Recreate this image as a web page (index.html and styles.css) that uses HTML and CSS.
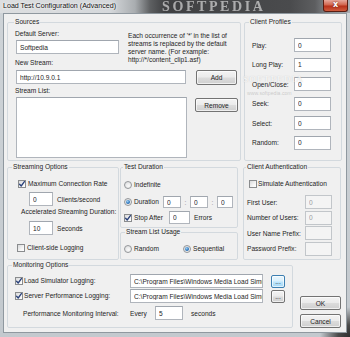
FILE: index.html
```html
<!DOCTYPE html>
<html>
<head>
<meta charset="utf-8">
<title>Load Test Configuration (Advanced)</title>
<link rel="stylesheet" href="styles.css">
</head>
<body>
<div class="window">
  <div class="titlebar">
    <span class="title">Load Test Configuration (Advanced)</span>
    <span class="wm-title">SOFTPEDIA</span>
    <span class="close">x</span>
  </div>
  <div class="client">
    <span class="wm wm-big">SOFTPEDIA</span>
    <span class="wm wm-url">www.softpedia.com</span>

    <div class="row row1">
      <fieldset class="grp sources">
        <legend>Sources</legend>
        <div class="src-grid">
          <span class="lbl">Default Server:</span>
          <p class="desc">Each occurrence of '*' in the list of<br>streams is replaced by the default<br>server name. (For example:<br>http://*/content_clip1.asf)</p>
          <input class="edit srv" value="Softpedia">
          <span class="lbl lbl-new">New Stream:</span>
        </div>
        <div class="src-row r-new">
          <input class="edit stream" value="http://10.9.0.1">
          <button class="btn add">Add</button>
        </div>
        <span class="lbl lbl-list">Stream List:</span>
        <div class="src-row r-list">
          <div class="listbox"></div>
          <button class="btn remove">Remove</button>
        </div>
      </fieldset>

      <fieldset class="grp profiles">
        <legend>Client Profiles</legend>
        <div class="prof-grid">
          <span>Play:</span><input class="edit" value="0">
          <span>Long Play:</span><input class="edit" value="1">
          <span>Open/Close:</span><input class="edit" value="0">
          <span>Seek:</span><input class="edit" value="0">
          <span>Select:</span><input class="edit" value="0">
          <span>Random:</span><input class="edit" value="0">
        </div>
      </fieldset>
    </div>

    <div class="row row2">
      <fieldset class="grp streaming">
        <legend>Streaming Options</legend>
        <div class="chkrow maxconn"><span class="chk on"><svg viewBox="0 0 8 8"><path d="M1.6 4.2 L3.2 6 L6.4 1.6"/></svg></span><span class="cl">Maximum Connection Rate</span></div>
        <div class="inrow r-rate"><input class="edit num" value="0"><span class="after">Clients/second</span></div>
        <span class="lbl accel">Accelerated Streaming Duration:</span>
        <div class="inrow r-secs"><input class="edit num" value="10"><span class="after">Seconds</span></div>
        <div class="chkrow logging"><span class="chk"></span><span class="cl">Client-side Logging</span></div>
      </fieldset>

      <div class="midcol">
        <fieldset class="grp duration">
          <legend>Test Duration</legend>
          <div class="radrow"><span class="radio"></span><span class="rl">Indefinite</span></div>
          <div class="durrow">
            <span class="durlbl"><span class="radio on"></span><span class="rl">Duration</span></span>
            <input class="edit d1" value="0"><span class="colon">:</span><input class="edit d1" value="0"><span class="colon">:</span><input class="edit d3" value="0">
          </div>
          <div class="stoprow">
            <span class="stoplbl"><span class="chk on"><svg viewBox="0 0 8 8"><path d="M1.6 4.2 L3.2 6 L6.4 1.6"/></svg></span><span class="cl">Stop After</span></span>
            <input class="edit errs" value="0"><span class="after">Errors</span>
          </div>
        </fieldset>
        <fieldset class="grp usage">
          <legend>Stream List Usage</legend>
          <div class="radrow">
            <span class="opt-random"><span class="radio"></span><span class="rl">Random</span></span>
            <span class="radio on"></span><span class="rl">Sequential</span>
          </div>
        </fieldset>
      </div>

      <fieldset class="grp auth">
        <legend>Client Authentication</legend>
        <div class="chkrow sim"><span class="chk"></span><span class="cl">Simulate Authentication</span></div>
        <div class="auth-grid">
          <span>First User:</span><input class="edit dis" value="0" disabled>
          <span>Number of Users:</span><input class="edit dis" value="0" disabled>
          <span>User Name Prefix:</span><input class="edit dis" value="" disabled>
          <span>Password Prefix:</span><input class="edit dis" value="" disabled>
        </div>
      </fieldset>
    </div>

    <div class="row row3">
      <fieldset class="grp monitoring">
        <legend>Monitoring Options</legend>
        <div class="monrow">
          <span class="monlbl"><span class="chk on"><svg viewBox="0 0 8 8"><path d="M1.6 4.2 L3.2 6 L6.4 1.6"/></svg></span><span class="cl">Load Simulator Logging:</span></span>
          <input class="edit path" value="C:\Program Files\Windows Media Load Simulator\Logs">
          <button class="btn dots hot">...</button>
        </div>
        <div class="monrow r2">
          <span class="monlbl"><span class="chk on"><svg viewBox="0 0 8 8"><path d="M1.6 4.2 L3.2 6 L6.4 1.6"/></svg></span><span class="cl">Server Performance Logging:</span></span>
          <input class="edit path" value="C:\Program Files\Windows Media Load Simulator\Logs">
          <button class="btn dots">...</button>
        </div>
        <div class="monrow r3">
          <span class="intlbl">Performance Monitoring Interval:</span>
          <span class="every">Every</span>
          <input class="edit interval" value="5">
          <span class="secs">seconds</span>
        </div>
      </fieldset>
      <div class="okcol">
        <button class="btn ok">OK</button>
        <button class="btn cancel">Cancel</button>
      </div>
    </div>
  </div>
</div>
</body>
</html>
```

FILE: styles.css
```css
* { box-sizing: border-box; }

html, body {
  margin: 0;
  padding: 0;
}

body {
  width: 350px;
  height: 337px;
  overflow: hidden;
  font-family: "Liberation Sans", Arial, sans-serif;
  font-size: 6.6px;
  color: #1e1e1e;
}

.window {
  width: 350px;
  height: 337px;
  display: flex;
  flex-direction: column;
  position: relative;
  background:
    radial-gradient(circle at 100% 100%, #2e2e2e 0, #4a4a4a 12px, rgba(80,80,80,0) 30px),
    linear-gradient(180deg, #cfd4d8 0%, #c3c9ce 100%);
}

/* ---------- title bar ---------- */
.titlebar {
  height: 13px;
  flex: none;
  position: relative;
  overflow: hidden;
  display: flex;
  align-items: center;
  padding-left: 3px;
  background: linear-gradient(90deg,
    #dcdee0 0px, #d5d8db 110px, #a9adb0 135px, #5e6062 150px,
    #3f4042 165px, #4a4b4d 290px, #5d5e60 315px, #8a8e92 330px, #a9aeb3 350px);
}

.title {
  position: relative;
  z-index: 2;
  font-size: 7.1px;
  line-height: 9px;
  color: #111;
  text-shadow: 0 0 3px #fff, 0 0 2px #fff;
  white-space: nowrap;
}

.wm-title {
  position: absolute;
  left: 162px;
  top: 0;
  font-family: "Liberation Serif", serif;
  font-weight: bold;
  font-size: 14px;
  line-height: 13px;
  letter-spacing: 2.6px;
  color: rgba(235, 235, 235, 0.62);
  filter: blur(0.4px);
  white-space: nowrap;
}

.close {
  position: absolute;
  right: 2px;
  top: 0;
  width: 25px;
  height: 12px;
  z-index: 3;
  border: 1px solid #5a1d12;
  border-top: none;
  border-radius: 0 0 3px 3px;
  background: linear-gradient(180deg, #e7a99d 0%, #d2654d 45%, #b8321b 55%, #cf5c3e 100%);
  color: #fff;
  font-family: "DejaVu Sans", sans-serif;
  font-weight: bold;
  font-size: 8px;
  line-height: 10px;
  text-align: center;
  text-shadow: 0 0 2px #5a1d12;
}

/* ---------- client area ---------- */
.client {
  position: relative;
  height: 320px;
  margin: 0 3px 4px 3px;
  border: 1px solid #8f989f;
  background: #f0f0f0;
  padding-top: 4px;
}

.wm {
  position: absolute;
  pointer-events: none;
  white-space: nowrap;
  z-index: 5;
}

.wm-big {
  left: 239px;
  top: 60px;
  font-family: "Liberation Serif", serif;
  font-weight: bold;
  font-size: 9px;
  letter-spacing: 1px;
  color: rgba(255, 255, 255, 0.75);
  text-shadow: 0 0 1px rgba(160,160,160,0.5);
}

.wm-url {
  left: 243px;
  top: 76px;
  font-size: 5.2px;
  color: rgba(150, 150, 150, 0.45);
}

.row {
  display: flex;
  align-items: stretch;
}

.row1 { height: 143px; }
.row2 { height: 97px; margin-top: 2px; }
.row3 { height: 67px; margin-top: 1px; }

/* ---------- group boxes ---------- */
.grp {
  margin: 0;
  padding: 0;
  min-width: 0;
  border: 1px solid #d3d9de;
  border-radius: 2px;
}

.grp legend {
  padding: 0 1px;
  margin-left: -1px;
  font-size: 6.6px;
  line-height: 8px;
  color: #1e1e1e;
}

.lbl {
  display: block;
  line-height: 8px;
  white-space: nowrap;
}

/* ---------- controls ---------- */
.edit {
  display: block;
  margin: 0;
  height: 14px;
  padding: 0 0 0 3px;
  border: 1px solid #b0b5bc;
  border-top-color: #a0a6ae;
  background: #fff;
  font-family: inherit;
  font-size: 6.6px;
  color: #1e1e1e;
  outline: none;
}

.edit.dis {
  background: #f4f4f4;
  border-color: #c2c6ca;
  color: #9c9c9c;
}

.btn {
  display: block;
  margin: 0;
  padding: 0;
  border: 1px solid #737373;
  border-radius: 2px;
  background: linear-gradient(180deg, #f3f3f3 0%, #ebebeb 48%, #dcdcdc 52%, #cfcfcf 100%);
  box-shadow: inset 0 0 0 1px rgba(255, 255, 255, 0.65);
  font-family: inherit;
  font-size: 6.6px;
  color: #1e1e1e;
  text-align: center;
}

.chk {
  flex: none;
  display: inline-block;
  width: 8px;
  height: 8px;
  border: 1px solid #8a8c8e;
  background: linear-gradient(135deg, #d8d9da 0%, #f4f4f4 60%, #fff 100%);
  position: relative;
}

.chk svg {
  position: absolute;
  left: -1px;
  top: -1px;
  width: 8px;
  height: 8px;
}

.chk svg path {
  fill: none;
  stroke: #29407a;
  stroke-width: 1.3;
  stroke-linecap: round;
  stroke-linejoin: round;
}

.radio {
  flex: none;
  display: inline-block;
  width: 8px;
  height: 8px;
  border-radius: 50%;
  border: 1px solid #94979a;
  background: radial-gradient(circle at 60% 65%, #fafafa 0, #e2e3e4 70%, #cfd0d1 100%);
  position: relative;
}

.radio.on::after {
  content: "";
  position: absolute;
  left: 1px;
  top: 1px;
  width: 4px;
  height: 4px;
  border-radius: 50%;
  background: radial-gradient(circle at 40% 35%, #9fd0f2 0, #2d78c0 55%, #1b4f8e 100%);
}

.cl, .rl { white-space: nowrap; line-height: 8px; }
.rl { margin-left: 2px; }
.cl { margin-left: 2px; }

/* ---------- sources ---------- */
.sources {
  width: 234px;
  margin-left: 3px;
  padding: 4px 0 0 7px;
}

.src-grid {
  display: grid;
  grid-template-columns: 113px 106px;
}

.desc {
  grid-column: 2;
  grid-row: 1 / span 3;
  margin: 2px 0 0 0;
  line-height: 8px;
  white-space: nowrap;
}

.srv {
  grid-column: 1;
  grid-row: 2;
  width: 103px;
  margin: 2px 0 0 1px;
}

.lbl-new {
  grid-column: 1;
  grid-row: 3;
  margin-top: 5px;
}

.src-row {
  display: flex;
  align-items: flex-start;
}

.r-new { margin-top: 3px; }
.stream { width: 170px; margin-left: 1px; }
.add { width: 41px; height: 15px; margin-left: 10px; }

.lbl-list { margin-top: 2px; }

.r-list { margin-top: 2px; }
.listbox {
  width: 171px;
  height: 61px;
  margin-left: 1px;
  border: 1px solid #b0b5bc;
  border-top-color: #a0a6ae;
  background: #fff;
}
.remove { width: 43px; height: 14px; margin: 1px 0 0 8px; }

/* ---------- client profiles ---------- */
.profiles {
  width: 98px;
  margin-left: 3px;
  padding: 12px 0 0 7px;
}

.profiles legend { margin-left: -3px; }

.prof-grid {
  display: grid;
  grid-template-columns: 42px 37px;
  grid-auto-rows: 14px;
  row-gap: 5.6px;
  align-items: center;
  white-space: nowrap;
}

.prof-grid .edit { width: 37px; }

/* ---------- streaming options ---------- */
.streaming {
  width: 112px;
  margin-left: 3px;
  padding: 9px 0 0 5px;
}

.chkrow {
  display: flex;
  align-items: center;
  height: 8px;
}

.maxconn { margin-left: 5px; }

.inrow {
  display: flex;
  align-items: center;
  margin-left: 16px;
}

.r-rate { margin-top: 4px; }
.r-secs { margin-top: 5px; }

.num { width: 24px; }
.after { margin-left: 4px; white-space: nowrap; }

.accel { margin: 2px 0 0 8px; }

.logging { margin: 9px 0 0 4px; }

/* ---------- test duration ---------- */
.midcol {
  width: 118px;
  margin-left: 1px;
  display: flex;
  flex-direction: column;
}

.duration {
  height: 65px;
  padding: 10px 0 0 3px;
}

.radrow {
  display: flex;
  align-items: center;
  height: 8px;
}

.durrow {
  display: flex;
  align-items: center;
  height: 12px;
  margin-top: 7px;
}

.durlbl {
  display: flex;
  align-items: center;
  width: 39px;
}

.d1 { width: 18px; height: 12px; }
.d3 { width: 16px; height: 12px; }

.colon {
  width: 9px;
  text-align: center;
  color: #8a8a8a;
}

.stoprow {
  display: flex;
  align-items: center;
  height: 13px;
  margin-top: 3px;
}

.stoplbl {
  display: flex;
  align-items: center;
  width: 45px;
}

.errs { width: 21px; height: 13px; }

/* ---------- stream list usage ---------- */
.usage {
  height: 32px;
  padding: 9px 0 0 3px;
}

.usage legend { margin-left: 1px; }

.opt-random {
  display: flex;
  align-items: center;
  width: 59px;
}

/* ---------- client authentication ---------- */
.auth {
  width: 98px;
  margin-left: 5px;
  padding: 9px 0 0 3px;
}

.sim { margin-left: 2px; }
.sim .cl { margin-left: 1px; }

.auth-grid {
  display: grid;
  grid-template-columns: 58px 27px;
  grid-auto-rows: 14px;
  row-gap: 1.6px;
  align-items: center;
  margin-top: 7px;
  white-space: nowrap;
}

.auth-grid .edit { width: 27px; }

/* ---------- monitoring options ---------- */
.monitoring {
  width: 286px;
  margin-left: 3px;
  padding: 5px 0 0 5px;
}

.monrow {
  display: flex;
  align-items: center;
  height: 14px;
}

.monrow.r2 { margin-top: 1px; }
.monrow.r3 { margin-top: 3px; }

.monlbl {
  display: flex;
  align-items: center;
  width: 117px;
  padding-left: 2px;
}

.monlbl .cl { margin-left: 1px; }

.path { width: 133px; }

.dots {
  width: 14px;
  height: 13px;
  margin-left: 8px;
  line-height: 9px;
}

.dots.hot {
  border-color: #3c7fb1;
  background: linear-gradient(180deg, #eaf6fd 0%, #d9f0fc 48%, #bee6fd 52%, #a7d9f5 100%);
}

.intlbl {
  width: 107px;
  margin-left: 10px;
  white-space: nowrap;
}

.every { width: 25px; }
.interval { width: 28px; }
.secs { margin-left: 8px; }

/* ---------- OK / Cancel ---------- */
.okcol {
  width: 41px;
  margin-left: 7px;
  padding-top: 35px;
  display: flex;
  flex-direction: column;
}

.ok, .cancel { width: 41px; height: 14px; }
.cancel { margin-top: 4px; }
```
